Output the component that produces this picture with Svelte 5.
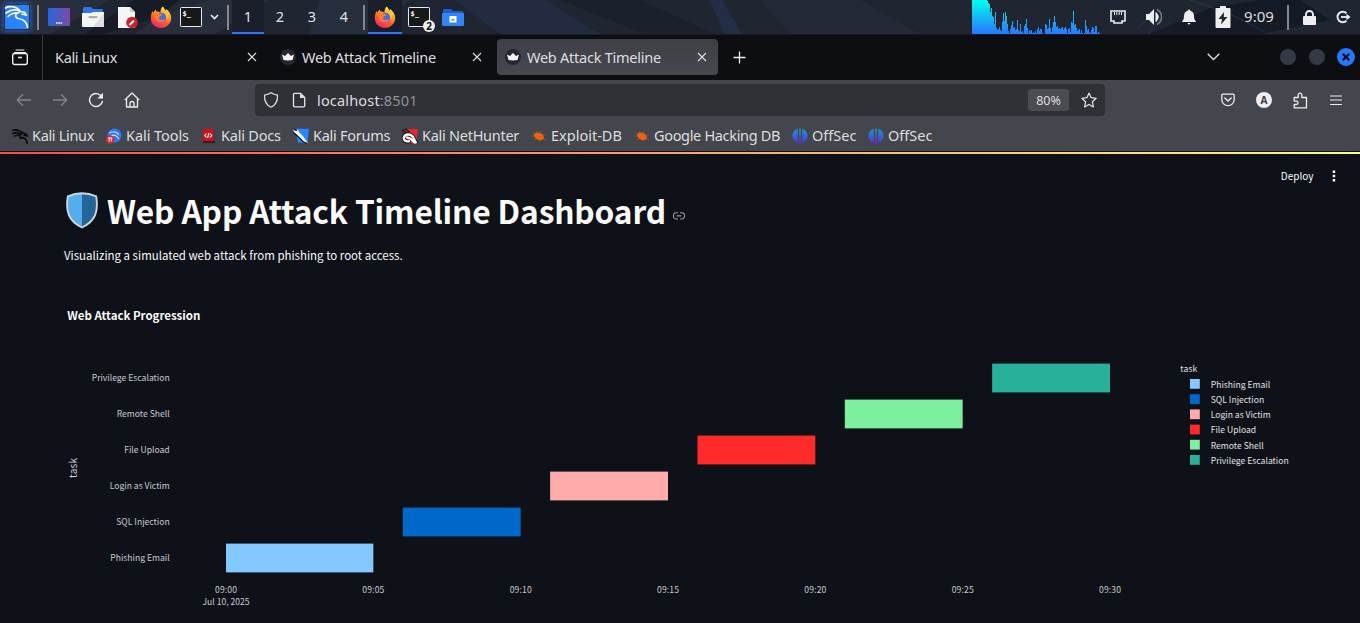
<script>
  const load = [
    34,34,34,34,34,34,34,34,34,34,34,34,34,34,34,33,31,30,22,26,18,17,10,22,6,4,5,7,4,3,12,21,13,22,18,10,3,1,
    5,9,13,6,7,4,5,14,4,3,10,2,3,1,8,10,15,6,1,4,3,4,1,2,1,3,1,5,7,3,5,5,1,0,0,10,9,5,6,15,6,2,7,12,18,12,
    7,8,5,6,5,6,7,4,6,7,5,1,5,6,2,12,11,23,9,10,6,3,4,5,1,4,1,0,1,14,8,4,5,2,1,4,7,6,2,8,8,1,2,1
  ];

  const tabs = [
    { title: 'Kali Linux', icon: false, active: false, track: -0.33 },
    { title: 'Web Attack Timeline', icon: true, active: false, track: -0.25 },
    { title: 'Web Attack Timeline', icon: true, active: true, track: -0.25 }
  ];

  const bookmarks = [
    { name: 'Kali Linux', icon: 'dragon', w: 62, track: -0.33 },
    { name: 'Kali Tools', icon: 'tools', w: 63, track: -0.07 },
    { name: 'Kali Docs', icon: 'docs', w: 60, track: -0.22 },
    { name: 'Kali Forums', icon: 'forums', w: 77, track: -0.27 },
    { name: 'Kali NetHunter', icon: 'nethunter', w: 97, track: -0.27 },
    { name: 'Exploit-DB', icon: 'bug', w: 71, track: 0 },
    { name: 'Google Hacking DB', icon: 'bug', w: 126, track: -0.33 },
    { name: 'OffSec', icon: 'offsec', w: 44, track: 0 },
    { name: 'OffSec', icon: 'offsec', w: 44, track: 0 }
  ];

  const tasks = [
    { name: 'Phishing Email', start: 0, end: 5, color: '#83c9ff', w: 59.500 },
    { name: 'SQL Injection', start: 6, end: 10, color: '#0068c9', w: 53.500 },
    { name: 'Login as Victim', start: 11, end: 15, color: '#ffabab', w: 60 },
    { name: 'File Upload', start: 16, end: 20, color: '#ff2b2b', w: 45.500 },
    { name: 'Remote Shell', start: 21, end: 25, color: '#7defa1', w: 53 },
    { name: 'Privilege Escalation', start: 26, end: 30, color: '#29b09d', w: 78 }
  ];
  const ticks = [0, 5, 10, 15, 20, 25, 30];
  const px = (m) => 226 + m * 29.467;
  const two = (n) => String(n).padStart(2, '0');
</script>

{#snippet dragon(color)}
  <path d="M.5 2.500 4 1.800 8 3.200 12 5.500M.5 5.500 4.500 4.600 9 6.500M2.500 8 7 7M9.600 5.200C6.500 6.600 7 9 9.500 9.400 13 9.800 14.800 11.500 15.200 15.300M11.500 9.800 8.600 10.600M12 5.500 14.500 6.200 15.400 8 12 7.200" fill="none" stroke={color} stroke-width="1.600" stroke-linecap="round" stroke-linejoin="round" />
{/snippet}

{#snippet firefox()}
  <svg width="22" height="22" viewBox="0 0 22 22">
    <defs>
      <linearGradient id="fox" x1=".8" y1="0" x2=".3" y2="1">
        <stop offset="0" stop-color="#fff34f" /><stop offset=".35" stop-color="#ffa82c" />
        <stop offset=".65" stop-color="#ff5a36" /><stop offset="1" stop-color="#f02368" />
      </linearGradient>
    </defs>
    <path d="M12.500.5c2 1.400 2.200 3 3.200 4.200.4-.5.5-1 .5-1.600 2.700 2 5 5.200 5 9C21.200 17.700 16.600 22 11 22S.8 17.600.8 12.200c0-2.900.6-5.200 1.900-7.200l.6 2C4 5.500 4.800 4.200 5.800 3.200c0 1 .2 1.700.6 2.400 1.500-.2 3 .1 4 .8C10.600 4 11 2 12.500.5z" fill="url(#fox)" />
    <circle cx="11.200" cy="11.700" r="4.900" fill="#4a6be0" />
    <path d="M4.500 7.500c2.500-1.300 4.600-.4 5.200.4 1 .1 2 .1 2.700.3-.2 1.300-1.500 1.700-2.800 2-.4.700.1 1.700-1 2.300 1.300 1.800 3 2 4.600 1 1.400-.3 2 .2 1.700.8-1.800 2.700-7.300 2.600-9-.5-1.300-2-1.700-4-1.400-6.300z" fill="#ff7a2c" />
    <path d="M13 2c3 3 4 5 3.500 9.500-.2 1.500.2 2 .8 1.500C19 9 17 5.500 13 2z" fill="#ffd33d" opacity=".8" />
  </svg>
{/snippet}

{#snippet terminal()}
  <svg width="22" height="20" viewBox="0 0 22 20">
    <rect x=".5" y=".5" width="21" height="19" rx=".8" fill="#171818" stroke="#e9e9e9" />
    <text x="2.500" y="9" font-family="DejaVu Sans Mono, monospace" font-weight="700" font-size="7" fill="#fff">$_</text>
  </svg>
{/snippet}

{#snippet closeX()}
  <svg width="10" height="10" viewBox="0 0 10 10"><path d="M1 1l8 8M9 1L1 9" stroke="#dfe0e2" stroke-width="1.100" /></svg>
{/snippet}

{#snippet mark(kind)}
  <svg width="16" height="16" viewBox="0 0 16 16">
    {#if kind === 'dragon'}
      {@render dragon('#08090a')}
    {:else if kind === 'tools'}
      <circle cx="8.500" cy="7.500" r="7" fill="#2777ff" />
      <path d="M3 5c4-2 8-1 10 2M5 8c3-2 6-.5 8 3" fill="none" stroke="#dbe8ff" stroke-width="1.100" />
      <circle cx="4.200" cy="11.500" r="4.200" fill="#e2262e" />
      <path d="M2 10h4.400M3.200 10v3.500M5.300 10v3.500" stroke="#fff" stroke-width="1" />
    {:else if kind === 'docs'}
      <path d="M2 1.500 3.500.5H14v12.500l-1 2.500H2z" fill="#cc1118" />
      <path d="M2 13h12v2.200H2z" fill="#1d2438" /><path d="M12.500 1H14v12h-1.500z" fill="#333d68" />
      <path d="M5.500 5.500 3.700 7.500l1.800 2M9 5.500l1.800 2L9 9.500M7.900 5 6.600 10" fill="none" stroke="#fff" stroke-width="1.100" />
    {:else if kind === 'forums'}
      <path d="M2 .8h14l-1.500 14H5z" fill="#2785ff" />
      <path d="M0 1.500 2.500 3 5 1.500 6 4l3 3 3 4 3 4-3.500-1L8 11 4.500 7.500 1.500 5z" fill="#f1f5fb" />
      <path d="M.5 4.500 5.500 9l4 4.200 4.500 2.200M1 .8l3 2" fill="none" stroke="#111827" stroke-width="1.100" />
    {:else if kind === 'nethunter'}
      <path d="M3 1h13l-2 14H5z" fill="#e5272d" />
      <path d="M0 2l5 3M3 .8 7.500 4" stroke="#111" stroke-width="1.300" />
      <path d="M7 13.500C3.500 14 1.500 12 1.700 9.500 2.500 5.500 8.500 5 11 9l2.800 5" fill="none" stroke="#111" stroke-width="4" stroke-linecap="round" />
      <path d="M7 13.300C3.500 13.800 1.500 12 1.900 9.500 2.700 5.800 8.500 5.300 11 9l2.800 5.500M5 9.500l4 1.500 3.500 3.500" fill="none" stroke="#fff" stroke-width="2.400" stroke-linecap="round" />
    {:else if kind === 'bug'}
      <ellipse cx="8.200" cy="8.300" rx="5.200" ry="3.400" transform="rotate(25 8 8)" fill="#f1600d" />
      <path d="M6 6 5 3M9 5.500 10 3M4 8H.8M5 11l-2 .8M9 11.500 8 13.500M12 7h2.500M12.500 11l2.700 1M4 6 1.500 4.500" stroke="#a8603a" stroke-width=".7" />
    {:else}
      <defs><linearGradient id="os" gradientUnits="userSpaceOnUse" x1="0" y1="0" x2="0" y2="16"><stop stop-color="#14a3ba" /><stop offset="1" stop-color="#6226e5" /></linearGradient></defs>
      <path d="M5.800.8v14.200C-1.500 12.500-1.500 3 5.800.8zM7.200.4h1.600v15.400H7.200zM10.200.8c7.300 2.200 7.300 11.700 0 14.200z" fill="url(#os)" />
    {/if}
  </svg>
{/snippet}

<div class="screen">
  <header class="panel">
    <svg class="wall" width="1360" height="34" viewBox="0 0 1360 34" preserveAspectRatio="none">
      <path d="M0 0h110L50 34H0z" fill="#303645" opacity=".6" /><path d="M135 0h75L105 34H85z" fill="#14171f" opacity=".7" />
      <path d="M180 0h90l-55 34h-80z" fill="#343a4a" opacity=".45" /><path d="M320 0h90l-40 34h-60z" fill="#2c3345" opacity=".6" />
      <path d="M455 0h90l55 34H500z" fill="#26344f" opacity=".45" /><path d="M560 0h80l75 34h-70z" fill="#151b27" opacity=".5" />
      <path d="M710 0h12l20 34h-18z" fill="#284674" opacity=".3" /><path d="M760 0h100l60 34H790z" fill="#2c3444" opacity=".3" />
      <path d="M1150 34l60-26 50-8h40l30 20-70 14z" fill="#101621" opacity=".7" />
      <path d="M1138 28l16-16 6 8-12 14M1190 0l40 14 35 18" fill="none" stroke="#355c80" opacity=".4" />
    </svg>
    <div class="side">
      <span class="cell c34 kali">
        <svg width="26" height="26" viewBox="0 0 26 26">
          <rect x="1" y="1" width="24" height="24" rx="1" fill="#2883ff" />
          <path d="M1.500 4C6 1.500 12 2.500 16 6.500M2 9C7 5.500 12 5 16.500 7.500l4 .8 2 3-4.500-1.200M4 12.500c3-3 6-3.800 9.500-3.800M15 8.500c-4.500 1.500-4.500 5-.5 6 5.500 1 8.500 4 9 9" fill="none" stroke="#fff" stroke-width="1.600" stroke-linecap="round" stroke-linejoin="round" />
        </svg>
      </span>
      <i class="bar"></i>
      <span class="cell c34">
        <svg width="22" height="18" viewBox="0 0 22 18"><defs><linearGradient id="desk"><stop stop-color="#2766d8" /><stop offset="1" stop-color="#7c4aa8" /></linearGradient></defs><rect width="22" height="18" rx="1" fill="url(#desk)" /><path d="M8 15h1.500M10.300 15h1.500M12.600 15h1.500" stroke="#fff" stroke-width="1.400" /></svg>
      </span>
      <span class="cell c34">
        <svg width="22" height="20" viewBox="0 0 22 20"><path d="M1 1q0-1 1-1h7l2 2h9q1 0 1 1v5H1z" fill="#2f74e8" /><path d="M0 6h9l2-1h11v14q0 1-1 1H1q-1 0-1-1z" fill="#f4f4f4" /><path d="M22 6v13q0 1-1 1H11z" fill="#dedede" /><rect x="6.500" y="9" width="9" height="2.200" rx="1" fill="#aaa" /></svg>
      </span>
      <span class="cell c34">
        <svg width="22" height="24" viewBox="0 0 22 24"><path d="M2 2h12l5 5v16H2z" fill="#f6f6f6" /><path d="M14 2v5h5z" fill="#c8c8c8" /><circle cx="16" cy="17.500" r="5.800" fill="#cf1f28" /><path d="M13.500 20l4.500-4.500" stroke="#fff" stroke-width="2" /></svg>
      </span>
      <span class="cell c34">{@render firefox()}</span>
      <span class="cell c26">{@render terminal()}</span>
      <span class="cell c20"><svg width="9" height="6" viewBox="0 0 9 6"><path d="M1 1l3.500 3.500L8 1" fill="none" stroke="#eee" stroke-width="1.600" /></svg></span>
      <i class="bar"></i>
      {#each [1, 2, 3, 4] as n}
        <span class="cell space" class:on={n === 1}>{n}</span>
      {/each}
      <i class="bar"></i>
      <span class="cell c34 on">{@render firefox()}</span>
      <span class="cell c34 badged">{@render terminal()}<b>2</b></span>
      <span class="cell c34">
        <svg width="22" height="17" viewBox="0 0 22 17"><path d="M1 1q0-1 1-1h7l2 2h9q1 0 1 1v4H1z" fill="#1e5ec9" /><path d="M0 4h22v12q0 1-1 1H1q-1 0-1-1z" fill="#3584f5" /><rect x="7.500" y="7" width="7" height="6.500" fill="#fff" /><path d="M9 11.500 11 9.500l2 2z" fill="#5572a6" /></svg>
      </span>
    </div>
    <div class="side">
      <svg class="graph" width="128" height="34" viewBox="0 0 128 34" shape-rendering="crispEdges">
        <defs><linearGradient id="cpu" gradientUnits="userSpaceOnUse" x1="0" y1="0" x2="0" y2="34"><stop stop-color="#00fff0" /><stop offset=".5" stop-color="#18b8f4" /><stop offset="1" stop-color="#2777ff" /></linearGradient></defs>
        {#each load as h, i}<rect x={i} y={34 - h} width="1" height={h} fill="url(#cpu)" />{/each}
      </svg>
      <span class="cell c36"><svg width="16" height="14" viewBox="0 0 16 14"><path d="M1 1h14v10h-3v2H4v-2H1z" fill="none" stroke="#eee" stroke-width="1.600" /><path d="M4.500 2v3M6.800 2v3M9.200 2v3M11.500 2v3" stroke="#eee" /></svg></span>
      <span class="cell c36"><svg width="18" height="18" viewBox="0 0 18 18"><path d="M1 6h3l5-5v16l-5-5H1z" fill="#eee" /><path d="M11 4.500q4.500 4.500 0 9z" fill="#eee" stroke="#eee" /><path d="M12 1.500c6 3 6 12 0 15" fill="none" stroke="#777b83" stroke-width="1.500" /></svg></span>
      <span class="cell c34"><svg width="14" height="16" viewBox="0 0 14 16"><path d="M7 .5q1.200 0 1.200 1.200C11 2.500 12 4.500 12 7c0 3 .7 4 2 5.500V13H0v-.5C1.300 11 2 10 2 7c0-2.500 1-4.500 3.800-5.300Q5.800.5 7 .5zM5.500 14h3Q8 15.500 7 15.500T5.500 14z" fill="#eee" /></svg></span>
      <span class="cell c34"><svg width="16" height="22" viewBox="0 0 16 22"><path d="M5 0h6v2h3.500q1 0 1 1v18q0 1-1 1h-13q-1 0-1-1V3q0-1 1-1H5z" fill="#eee" /><path d="M9 6 3.500 13H7l-1 5.500L12.500 11H8.800z" fill="#202633" /></svg></span>
      <span class="cell clock">9:09</span>
      <i class="bar wide"></i>
      <span class="cell c22"><svg width="13" height="15" viewBox="0 0 13 15"><path d="M3 7V4.500a3.500 3.500 0 0 1 7 0V7" fill="none" stroke="#eee" stroke-width="1.900" /><rect y="6" width="13" height="9" rx="1" fill="#eee" /></svg></span>
      <span class="cell exit"><svg width="15" height="14" viewBox="0 0 15 14"><path d="M10.500 3.200A5.300 5.300 0 1 0 10.500 10.800" fill="none" stroke="#eee" stroke-width="1.900" /><path d="M5 7h6.500" stroke="#eee" stroke-width="1.800" /><path d="M10.500 3.800 14.500 7l-4 3.200z" fill="#eee" /></svg></span>
    </div>
  </header>

  <div class="tabstrip">
    <span class="view"><svg width="18" height="17" viewBox="0 0 18 17"><path d="M5 1h8M3.500 3.500h11" fill="none" stroke="#eee" stroke-width="1.200" stroke-linecap="round" /><rect x="1.700" y="4.500" width="14.600" height="11" rx="2" fill="none" stroke="#eee" stroke-width="1.400" /><path d="M7 8.500h4" stroke="#eee" stroke-width="1.500" /></svg></span>
    {#each tabs as t}
      <div class="tab" class:active={t.active}>
        {#if t.icon}
          <svg width="16" height="16" viewBox="0 0 16 16"><circle cx="8" cy="8" r="8" fill="#262730" /><path d="M2 5.500 5 7l3-3 3 3 3-1.500L12.500 11q-4.500.8-9 0z" fill="#f3f3f3" /></svg>
        {/if}
        <span style="letter-spacing:{t.track}px">{t.title}</span>
        {@render closeX()}
      </div>
    {/each}
    <svg class="plus" width="13" height="13" viewBox="0 0 13 13"><path d="M6.500.5v12M.5 6.500h12" stroke="#eee" stroke-width="1.300" /></svg>
    <svg class="down" width="13" height="8" viewBox="0 0 13 8"><path d="M.7.8 6.500 6.500 12.300.8" fill="none" stroke="#e6e6e6" stroke-width="1.300" /></svg>
    <div class="wins">
      <i></i><i></i>
      <svg width="18" height="18" viewBox="0 0 18 18"><circle cx="9" cy="9" r="9" fill="#2777ff" /><path d="M5.700 5.700l6.600 6.600M12.300 5.700l-6.600 6.600" stroke="#0b0f1c" stroke-width="2.200" /></svg>
    </div>
  </div>

  <div class="chrome">
    <div class="nav">
      <div class="buttons">
        <span><svg width="16" height="14" viewBox="0 0 16 14"><path d="M15 7H1.500M7 1.200 1.200 7 7 12.800" fill="none" stroke="#83858a" stroke-width="1.300" /></svg></span>
        <span><svg width="16" height="14" viewBox="0 0 16 14"><path d="M1 7h13.500M9 1.200 14.800 7 9 12.800" fill="none" stroke="#83858a" stroke-width="1.300" /></svg></span>
        <span><svg width="16" height="16" viewBox="0 0 16 16"><path d="M13.800 5A6.500 6.500 0 1 0 14.500 8.800" fill="none" stroke="#eee" stroke-width="1.400" /><path d="M15 .8v5.700H9.300z" fill="#eee" /></svg></span>
        <span class="home"><svg width="16" height="16" viewBox="0 0 16 16"><path d="M.8 8 8 1l7.200 7M2.500 7v8h11V7M6 15v-3.500a2 2 0 0 1 4 0V15" fill="none" stroke="#eee" stroke-width="1.300" stroke-linejoin="round" /></svg></span>
      </div>
      <div class="url">
        <svg width="16" height="16" viewBox="0 0 16 16"><path d="M8 .8Q11 2.700 14.500 3.200c.2 5-1 9.500-6.500 12C2.500 12.700 1.300 8.200 1.500 3.200Q5 2.700 8 .8z" fill="none" stroke="#e5e5e6" stroke-width="1.200" /></svg>
        <svg width="16" height="16" viewBox="0 0 16 16"><path d="M2.500 2.300q0-1 1-1h6l4.200 4.200v8.300q0 1-1 1H3.500q-1 0-1-1z" fill="none" stroke="#e5e5e6" stroke-width="1.300" /><path d="M9 1.500V6h4.500z" fill="#e5e5e6" /></svg>
        <span class="addr">localhost<em>:8501</em></span>
        <span class="zoom">80%</span>
        <svg width="16" height="16" viewBox="0 0 16 16"><path d="M8 1l2.100 4.700 5.100.6-3.800 3.500 1 5.100L8 12.400l-4.400 2.500 1-5.100L.8 6.300l5.100-.6z" fill="none" stroke="#e5e5e6" stroke-width="1.200" stroke-linejoin="round" /></svg>
      </div>
      <div class="tools">
        <span><svg width="14" height="14" viewBox="0 0 14 14"><path d="M2 1.200h10q1.200 0 1.200 1.200V6.500a6.200 6.200 0 0 1-12.400 0V2.400Q.8 1.200 2 1.200zM3.800 5 7 8l3.200-3" fill="none" stroke="#eee" stroke-width="1.300" stroke-linecap="round" /></svg></span>
        <span><b class="avatar">A</b></span>
        <span><svg width="15" height="17" viewBox="0 0 15 17"><path d="M1.200 5.500H5.200V3a1.800 1.800 0 0 1 3.600 0V5.500H13.500V15.800H1.200V12.500H3.300a1.700 1.700 0 0 0 0-3.400H1.200z" fill="none" stroke="#eee" stroke-width="1.300" stroke-linejoin="round" /></svg></span>
        <span><svg width="12" height="11" viewBox="0 0 12 11"><path d="M0 1h12M0 5h12M0 9.500h12" stroke="#eee" stroke-width="1.200" /></svg></span>
      </div>
    </div>
    <div class="marks">
      {#each bookmarks as b}
        <div class="mark">{@render mark(b.icon)}<span style="width:{b.w}px;letter-spacing:{b.track}px">{b.name}</span></div>
      {/each}
    </div>
  </div>

  <main>
    <div class="toolbar">
      <span>Deploy</span>
      <svg width="4" height="12" viewBox="0 0 4 12"><path d="M.7.500h2.500v2.500H.7zM.7 4.700h2.500v2.500H.7zM.7 8.900h2.500v2.500H.7z" fill="#fafafa" /></svg>
    </div>
    <h1>
      <svg width="34" height="37" viewBox="0 0 34 37"><path d="M17 1.300Q24 1.500 31.200 4.300C33.500 19 31 29 17 35.500 3 29 .5 19 2.800 4.300Q10 1.500 17 1.300z" fill="#55acee" /><path d="M17 1.300Q24 1.500 31.200 4.300C33.500 19 31 29 17 35.500z" fill="#226699" /><path d="M17 1.300Q24 1.500 31.200 4.300C33.500 19 31 29 17 35.500 3 29 .5 19 2.800 4.300Q10 1.500 17 1.300z" fill="none" stroke="#ccd6dd" stroke-width="1.900" /></svg>
      <span>Web App Attack Timeline Dashboard</span>
      <svg class="link" width="12" height="8" viewBox="0 0 12 8"><path d="M5 .8H3.500a3.100 3.100 0 0 0 0 6.200H5M7 .8h1.500a3.100 3.100 0 0 1 0 6.200H7M3.700 3.900h4.600" fill="none" stroke="#9a9da3" stroke-width="1.100" /></svg>
    </h1>
    <p>Visualizing a simulated web attack from phishing to root access.</p>
    <svg class="chart" width="1360" height="333" viewBox="0 290 1360 333">
      <text class="title" x="67.300" y="320" textLength="133">Web Attack Progression</text>
      <text class="axis" transform="translate(77 478) rotate(-90)" textLength="20">task</text>
      {#each tasks as t, i}
        <text class="tick" x={169.700 - t.w} y={561.200 - i * 36} textLength={t.w}>{t.name}</text>
        <rect x={px(t.start)} y={543.600 - i * 36} width={px(t.end) - px(t.start)} height="28.800" fill={t.color} />
        <rect x="1190" y={379 + i * 15.200} width="9.800" height="9.800" fill={t.color} />
        <text class="leg" x="1210.700" y={388 + i * 15.150} textLength={t.w}>{t.name}</text>
      {/each}
      {#each ticks as m}
        <text class="tick" x={px(m) - 11} y="593" textLength="22">09:{two(m)}</text>
      {/each}
      <text class="tick" x="202.500" y="605" textLength="47">Jul 10, 2025</text>
      <text class="leg" x="1180.300" y="372" textLength="17">task</text>
    </svg>
  </main>
</div>

<style>
  :global(body) { margin: 0; background: #0e1117; overflow: hidden; }
  .screen { width: 1360px; height: 623px; display: flex; flex-direction: column; overflow: hidden; font-family: 'Noto Sans', sans-serif; font-size: 14.500px; color: #dededf; }
  svg { display: block; flex: none; }
  .panel { position: relative; height: 34px; flex: none; display: flex; justify-content: space-between; background: #202532; border-bottom: 1px solid #181b23; }
  .wall { position: absolute; inset: 0; }
  .side { position: relative; display: flex; height: 34px; }
  .cell { display: flex; align-items: center; justify-content: center; box-sizing: border-box; height: 34px; }
  .c20 { width: 20px; } .c22 { width: 22px; } .c26 { width: 26px; } .c34 { width: 34px; } .c36 { width: 36px; }
  .kali svg { box-shadow: 0 0 5px #2777ff; }
  .bar { width: 2px; height: 25px; margin: 5px 3px; background: #85878d; }
  .bar.wide { margin: 5px 9px; }
  .space { width: 32px; padding-bottom: 2px; color: #dfe3ea; }
  .on { background: #1a1e29; box-shadow: inset 0 -2px #2777ff; }
  .badged { position: relative; }
  .badged b { position: absolute; right: 1px; bottom: 2px; width: 12px; height: 12px; border-radius: 50%; background: #eee; color: #111; font-size: 10px; line-height: 12px; text-align: center; }
  .clock { width: 38px; padding-bottom: 2px; font-size: 15px; }
  .exit { width: 34px; margin-left: 6px; }
  .tabstrip { height: 45px; flex: none; display: flex; align-items: center; background: #0d0e12; }
  .view { width: 43px; height: 45px; box-sizing: border-box; padding-left: 11px; display: flex; align-items: center; border-right: 1px solid #3a3c40; margin-right: 4px; }
  .tab { width: 221px; height: 36px; box-sizing: border-box; padding: 0 11px 0 8px; margin-right: 4px; display: flex; align-items: center; gap: 6px; border-radius: 4px; margin-bottom: 1px; }
  .tab span { flex: 1; white-space: nowrap; padding-bottom: 1px; }
  .tab.active { background: linear-gradient(#3e4046, #46484f); }
  .plus { margin-left: 11px; }
  .down { margin: 0 0 1px auto; }
  .wins { display: flex; align-items: center; gap: 13px; margin: 0 5px 1px 60px; }
  .wins i { width: 16px; height: 16px; border-radius: 50%; background: #353945; }
  .wins i + i { margin-right: -1px; }
  .chrome { height: 71px; flex: none; background: #44464d; border-bottom: 1px solid #0e1016; }
  .nav { height: 40px; display: flex; align-items: center; }
  .buttons { width: 249px; padding-left: 6px; display: flex; }
  .buttons span, .tools span { width: 36px; display: flex; justify-content: center; align-items: center; }
  .buttons .home { width: 35px; }
  .url { width: 850px; height: 32px; box-sizing: border-box; padding: 0 8px; display: flex; align-items: center; background: #303136; border-radius: 4px; }
  .url svg + svg { margin-left: 12px; }
  .addr { flex: 1; margin-left: 10px; letter-spacing: .17px; }
  .addr em { font-style: normal; color: #929396; }
  .zoom { width: 41px; height: 22px; line-height: 23px; margin-right: 12px; border-radius: 3px; background: #4b4c51; font-size: 12.500px; text-align: center; }
  .tools { display: flex; margin-left: 105px; }
  .avatar { width: 16px; height: 16px; border-radius: 50%; background: #eee; color: #3a3c43; font-size: 10px; line-height: 16px; text-align: center; }
  .marks { height: 31px; padding-left: 12px; display: flex; gap: 12px; align-items: center; }
  .mark { display: flex; align-items: center; gap: 4px; }
  .mark span { white-space: nowrap; padding-bottom: 2px; }
  main { flex: 1; display: flex; flex-direction: column; font-family: 'Noto Sans CJK SC', 'Noto Sans CJK JP', sans-serif; color: #fafafa; background: #0e1117; }
  main::before { content: ''; height: 2px; background: linear-gradient(90deg, #ff4b4b, #fffd80); }
  .toolbar { height: 35px; padding: 7px 24px 0 0; display: flex; justify-content: flex-end; align-items: center; gap: 18.500px; font-size: 10px; box-sizing: border-box; }
  .toolbar svg { margin-top: 1px; }
  h1 { margin: 0; height: 42px; padding-left: 65px; display: flex; align-items: center; font-size: 31.700px; letter-spacing: -.14px; font-weight: 700; line-height: 42px; white-space: nowrap; }
  h1 span { margin-left: 8px; }
  .link { margin: 11px 0 0 7px; }
  p { margin: 13px 0 0 64px; height: 22px; line-height: 22px; font-size: 11.470px; }
  .chart { margin-top: 24px; }
  .title { font-size: 11.500px; font-weight: 700; fill: #fafafa; }
  .axis { font-size: 10px; fill: #d2d4d8; }
  .tick { font-size: 8.600px; fill: #c8cacf; }
  .leg { font-size: 8.600px; fill: #e0e1e4; }
</style>
